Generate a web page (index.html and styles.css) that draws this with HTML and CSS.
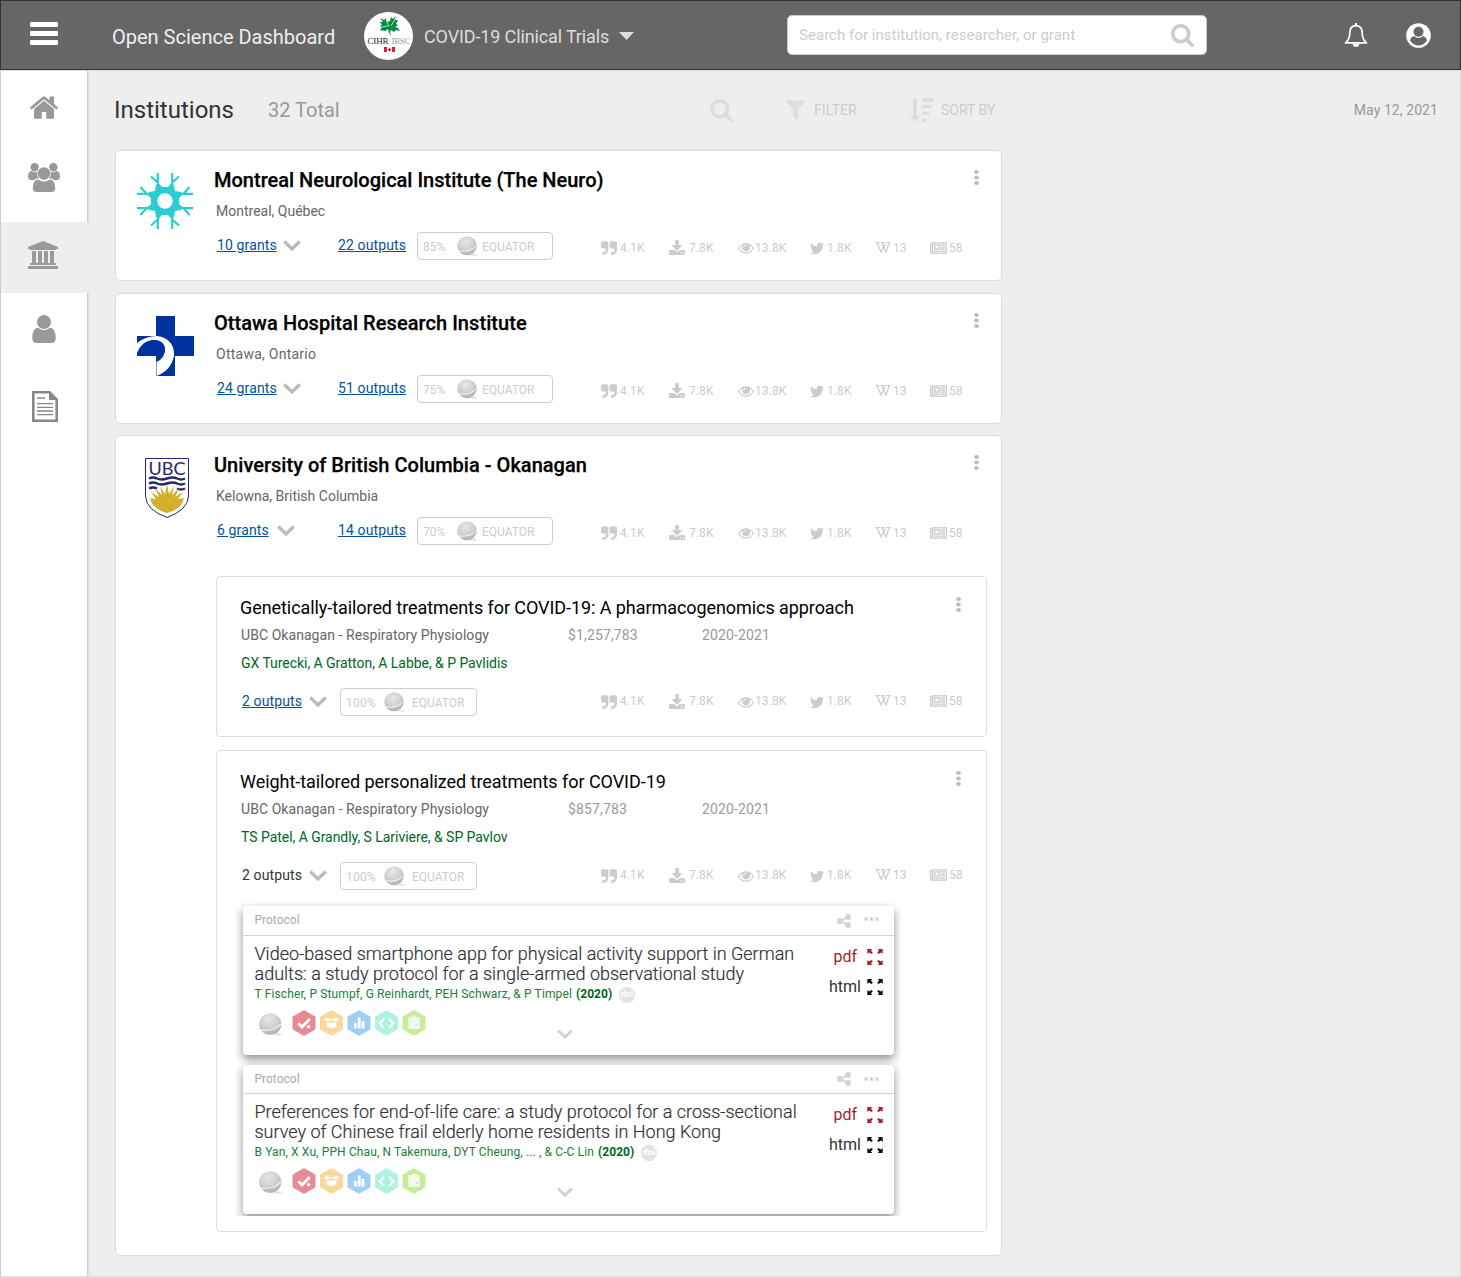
FILE: index.html
```html
<!DOCTYPE html>
<html lang="en">
<head>
<meta charset="utf-8">
<title>Open Science Dashboard</title>
<link rel="stylesheet" href="styles.css">
</head>
<body>
<svg class="defs" width="0" height="0" aria-hidden="true">
  <defs>
    <radialGradient id="ballfill" cx="42%" cy="28%" r="70%">
      <stop offset="0" stop-color="#e6e6e6"/><stop offset=".55" stop-color="#d2d2d2"/><stop offset="1" stop-color="#b4b4b4"/>
    </radialGradient>
    <radialGradient id="ballshade"><stop offset="0" stop-color="#ccc"/><stop offset="1" stop-color="#fff" stop-opacity="0"/></radialGradient>
  </defs>
  <symbol id="home" viewBox="89 253 1614 1283"><path d="M1472 992v480q0 26-19 45t-45 19h-384v-384h-256v384h-384q-26 0-45-19t-19-45v-480q0-1 .5-3t.5-3l575-474 575 474q1 2 1 6zm223-69l-62 74q-8 9-21 11h-3q-13 0-21-7l-692-577-692 577q-12 8-24 7-13-2-21-11l-62-74q-8-10-7-23.5t11-21.5l719-599q32-26 76-26t76 26l244 204v-195q0-14 9-23t23-9h192q14 0 23 9t9 23v408l219 182q10 8 11 21.5t-7 23.5z"/></symbol>
  <symbol id="search" viewBox="64 128 1664 1664"><path d="M1216 832q0-185-131.5-316.500t-316.500-131.500-316.500 131.500-131.500 316.500 131.500 316.500 316.500 131.500 316.500-131.500 131.500-316.500zm512 832q0 52-38 90t-90 38q-54 0-90-38l-343-342q-179 124-399 124-143 0-273.500-55.500t-225-150-150-225-55.500-273.500 55.500-273.500 150-225 225-150 273.500-55.500 273.500 55.500 225 150 150 225 55.500 273.500q0 220-124 399l343 343q37 37 37 90z"/></symbol>
  <symbol id="filter" viewBox="191 256 1410 1408"><path d="M1595 295q17 41-14 70l-493 493v742q0 42-39 59-13 5-25 5-27 0-45-19l-256-256q-19-19-19-45v-486l-493-493q-31-29-14-70 17-39 59-39h1280q42 0 59 39z"/></symbol>
  <symbol id="quote" viewBox="64 128 1664 1408"><path d="M832 320v704q0 104-40.500 198.500t-109.500 163.500-163.500 109.500-198.500 40.500h-64q-26 0-45-19t-19-45v-128q0-26 19-45t45-19h64q106 0 181-75t75-181v-32q0-40-28-68t-68-28h-224q-80 0-136-56t-56-136v-384q0-80 56-136t136-56h384q80 0 136 56t56 136zm896 0v704q0 104-40.500 198.500t-109.500 163.500-163.500 109.500-198.500 40.500h-64q-26 0-45-19t-19-45v-128q0-26 19-45t45-19h64q106 0 181-75t75-181v-32q0-40-28-68t-68-28h-224q-80 0-136-56t-56-136v-384q0-80 56-136t136-56h384q80 0 136 56t56 136z"/></symbol>
  <symbol id="download" viewBox="64 0 1664 1536"><path d="M1344 1344q0-26-19-45t-45-19-45 19-19 45 19 45 45 19 45-19 19-45zm256 0q0-26-19-45t-45-19-45 19-19 45 19 45 45 19 45-19 19-45zm128-224v320q0 40-28 68t-68 28h-1472q-40 0-68-28t-28-68v-320q0-40 28-68t68-28h465l135 136q58 56 136 56t136-56l136-136h464q40 0 68 28t28 68zm-325-569q17 41-14 70l-448 448q-18 19-45 19t-45-19l-448-448q-31-29-14-70 17-39 59-39h256v-448q0-26 19-45t45-19h256q26 0 45 19t19 45v448h256q42 0 59 39z"/></symbol>
  <symbol id="eye" viewBox="0 384 1792 1152"><path d="M1664 960q-152-236-381-353 61 104 61 225 0 185-131.500 316.500t-316.500 131.500-316.500-131.500-131.500-316.500q0-121 61-225-229 117-381 353 133 205 333.500 326.500t434.500 121.500 434.500-121.500 333.500-326.500zm-720-384q0-20-14-34t-34-14q-125 0-214.500 89.500t-89.500 214.500q0 20 14 34t34 14 34-14 14-34q0-86 61-147t147-61q20 0 34-14t14-34zm848 384q0 34-20 69-140 230-376.500 368.500t-499.500 138.500-499.500-139-376.500-368q-20-35-20-69t20-69q140-229 376.500-368t499.500-139 499.500 139 376.500 368q20 35 20 69z"/></symbol>
  <symbol id="twitter" viewBox="108 256 1576 1280"><path d="M1684 408q-67 98-162 167 1 14 1 42 0 130-38 259.500t-115.500 248.500-184.500 210.500-258 146-323 54.500q-271 0-496-145 35 4 78 4 225 0 401-138-105-2-188-64.500t-114-159.500q33 5 61 5 43 0 85-11-112-23-185.500-111.500t-73.500-205.500v-4q68 38 146 41-66-44-105-115t-39-154q0-88 44-163 121 149 294.500 238.500t371.500 99.500q-8-38-8-74 0-134 94.500-228.500t228.500-94.500q140 0 236 102 109-21 205-78-37 115-142 178 93-10 186-50z"/></symbol>
  <symbol id="wiki" viewBox="0 0 16 11"><path d="M.2.5h4.600M6 .5h4M11.300.5h4.500" fill="none" stroke="#ccc" stroke-width="1"/><path d="M2 .7 6.100 10 10.200 1.600M6.900.7l4.100 9.300L14.200.7" fill="none" stroke="#ccc" stroke-width="1.300"/></symbol>
  <symbol id="news" viewBox="0 256 2048 1408"><path transform="translate(0 128)" d="M1024 512h-384v384h384v-384zm128 640v128h-640v-128h640zm0-768v640h-640v-640h640zm640 768v128h-512v-128h512zm0-256v128h-512v-128h512zm0-256v128h-512v-128h512zm0-256v128h-512v-128h512zm-1536 960v-960h-128v960q0 26 19 45t45 19 45-19 19-45zm1664 0v-1088h-1536v1088q0 33-11 64h1483q26 0 45-19t19-45zm128-1216v1216q0 80-56 136t-136 56h-1664q-80 0-136-56t-56-136v-1088h256v-128h1792z" stroke="#ccc" stroke-width="40"/></symbol>
  <symbol id="bank" viewBox="0 0 1920 1792"><path d="M960 0l960 384v128h-128q0 26-20.500 45t-48.500 19h-1526q-28 0-48.500-19t-20.500-45h-128v-128zm-704 640h256v768h128v-768h256v768h128v-768h256v768h128v-768h256v768h59q28 0 48.500 19t20.500 45v64h-1664v-64q0-26 20.500-45t48.500-19h59v-768zm1595 960q28 0 48.500 19t20.500 45v128h-1920v-128q0-26 20.500-45t48.500-19h1782z"/></symbol>
  <symbol id="users" viewBox="0 0 32 29"><circle cx="6.600" cy="4.200" r="4.200"/><circle cx="25.400" cy="4.200" r="4.200"/><path d="M3.500 8Q6.500 10.300 9.300 8.700Q8.800 13.400 11 15Q7.500 15.300 6 17H3Q0 17 0 13.500Q0 8.500 3.500 8ZM28.500 8Q25.500 10.300 22.700 8.700Q23.200 13.400 21 15Q24.500 15.300 26 17H29Q32 17 32 13.500Q32 8.500 28.500 8Z"/><circle cx="16" cy="10.500" r="6.200"/><path d="M10.300 16.500Q16 20.800 21.700 16.500Q27 16.500 27.200 25Q27.200 29 23.500 29H8.500Q4.800 29 4.800 25Q5 16.500 10.300 16.500Z"/></symbol>
  <symbol id="user" viewBox="0 0 24 28"><circle cx="12" cy="7" r="7"/><path d="M6 12.800Q12 17.500 18 12.800Q23.500 13 23.700 23Q23.700 28 19.500 28H4.500Q.3 28 .3 23Q.5 13 6 12.800Z"/></symbol>
  <symbol id="ball" viewBox="0 0 24 22"><ellipse cx="17" cy="18.800" rx="7" ry="1.900" fill="url(#ballshade)"/><ellipse cx="10" cy="9.700" rx="9.800" ry="9.500" fill="url(#ballfill)"/><path d="M1.800 15Q14 16.300 19.400 9.500" fill="none" stroke="#fff" stroke-width=".9"/></symbol>
  <symbol id="chev" viewBox="0 0 18 11"><path d="M1.300 1.500 9 9 16.700 1.500" fill="none" stroke="#bbb" stroke-width="3.300"/></symbol>
  <symbol id="kebab" viewBox="0 0 5 15"><ellipse cx="2.500" cy="2" rx="2.400" ry="1.900"/><ellipse cx="2.500" cy="7.500" rx="2.400" ry="1.900"/><ellipse cx="2.500" cy="13" rx="2.400" ry="1.900"/></symbol>
  <symbol id="dots" viewBox="0 0 15 4"><circle cx="2" cy="2" r="1.900"/><circle cx="7.500" cy="2" r="1.900"/><circle cx="13" cy="2" r="1.900"/></symbol>
  <symbol id="share" viewBox="0 0 14 14"><path d="M11 3 3 7l8 4" fill="none" stroke="#d4d4d4" stroke-width="1.800"/><circle cx="11" cy="3" r="2.900"/><circle cx="3" cy="7" r="2.900"/><circle cx="11" cy="11" r="2.900"/></symbol>
  <symbol id="expand" viewBox="0 0 16 16"><path d="M.3 0H5.300L3.900 1.500 5.800 3.700 4.600 4.900 1.900 3.400 .3 5ZM15.700 0H10.700L12.100 1.500 10.200 3.700 11.400 4.900 14.100 3.400 15.700 5ZM.3 16H5.300L3.900 14.500 5.800 12.300 4.600 11.100 1.900 12.600 .3 11ZM15.700 16H10.700L12.100 14.500 10.200 12.300 11.400 11.100 14.100 12.600 15.700 11Z"/></symbol>
  <symbol id="hexes" viewBox="0 0 134 26">
    <g stroke-linejoin="round" stroke-width="3">
      <path d="M12 1.800 22 7.500V18.500L12 24.200 2 18.500V7.500Z" fill="#e78a93" stroke="#e78a93"/>
      <path transform="translate(27.500)" d="M12 1.800 22 7.500V18.500L12 24.200 2 18.500V7.500Z" fill="#fad79b" stroke="#fad79b"/>
      <path transform="translate(55)" d="M12 1.800 22 7.500V18.500L12 24.200 2 18.500V7.500Z" fill="#9fcff5" stroke="#9fcff5"/>
      <path transform="translate(82.500)" d="M12 1.800 22 7.500V18.500L12 24.200 2 18.500V7.500Z" fill="#b0f2e2" stroke="#b0f2e2"/>
      <path transform="translate(110)" d="M12 1.800 22 7.500V18.500L12 24.200 2 18.500V7.500Z" fill="#c7ec9a" stroke="#c7ec9a"/>
    </g>
    <path d="M6.300 13.200 10 17 17.800 9" fill="none" stroke="#fff" stroke-width="2.800"/><circle cx="16.600" cy="16.700" r="1.700" fill="#fff"/>
    <path d="M32 9.500 34.300 7.800 39.500 9.400 44.700 7.800 47 9.500 44.300 12 39.500 10 34.700 12ZM34.600 13 38 12 39.500 13.500 41 12 44.400 13V16.500L39.500 18.600 34.600 16.500Z" fill="#fff"/>
    <path d="M62 13h2.800v5.500H62ZM65.800 7.500h2.800v11h-2.800ZM69.600 11h2.800v7.500h-2.800Z" fill="#fff"/>
    <path d="M92 8.800 87.600 13.300 92 17.800M97 8.800 101.400 13.300 97 17.800" fill="none" stroke="#fff" stroke-width="2"/>
    <path d="M116.300 7h3l1.500-1.500h2.400L124.700 7h3V19H116.300Z" fill="#fff" opacity=".75"/><circle cx="124.700" cy="14.500" r="3" fill="#fff"/><path d="m123.200 14.500 1.200 1.200 2-2.300" fill="none" stroke="#aac" stroke-width=".9"/>
  </symbol>
</svg>

<header class="topbar">
  <button class="burger" aria-label="Menu"><i></i><i></i><i></i></button>
  <span class="brand">Open Science Dashboard</span>
  <svg class="funder" viewBox="0 0 49 48">
    <ellipse cx="24.500" cy="24" rx="24.500" ry="24" fill="#fff"/>
    <path d="M16 6l4 2 2-2 1 4 3-1 1-4 2 2 3-3-1 4 3 0-2 4 2 1-3 2 3 1 2 3-4-1-2 2-3-2-1 2 1 4-2-3-1-4-3 2-5-1 2-3-2-1 2-1-2-3 3 0z" fill="#0a8a43"/>
    <path d="M22 7.500l3 7M33 4l-6 10M18 15l6-1" stroke="#fff" stroke-width=".7" fill="none"/>
    <text x="3.500" y="31.500" textLength="21" font-size="9" fill="#222">CIHR</text><text x="27.500" y="31.500" textLength="19" font-size="9" fill="#999">IRSC</text>
    <path d="M20 35h3v5h-3zM28 35h3v5h-3zM25.500 35.500l1 1.500 1 .5-2 2-2-2 1-.5z" fill="#e31b37"/>
  </svg>
  <span class="program">COVID-19 Clinical Trials</span>
  <svg class="caret" viewBox="0 0 15 8"><path d="M0 0h15L7.500 8z" fill="#ddd"/></svg>
  <div class="searchbox"><span>Search for institution, researcher, or grant</span><svg><use href="#search"/></svg></div>
  <svg class="bell" viewBox="0 0 24 25"><path d="M12 0v2.500" stroke="#fff" stroke-width="2"/><path d="M12 2.600C7.500 2.600 5.800 6 5.800 10C5.800 15 4.500 17.500 1.500 19.900H22.500C19.500 17.500 18.200 15 18.200 10C18.200 6 16.500 2.600 12 2.600Z" fill="none" stroke="#fff" stroke-width="1.700" stroke-linejoin="round"/><path d="M8.500 20.500h7Q15 24 12 24T8.500 20.500Z" fill="#fff"/></svg>
  <svg class="account" viewBox="0 0 25 25"><circle cx="12.500" cy="12.500" r="12.300" fill="#fff"/><circle cx="12.500" cy="8.700" r="5" fill="#666"/><path d="M8 13Q12.500 16.800 17 13Q20.500 14 21 17.500Q17.500 22.500 12.500 22.500T4 17.500Q4.500 14 8 13Z" fill="#666"/></svg>
</header>

<div class="shell">
  <nav class="rail">
    <a class="r-home"><svg><use href="#home"/></svg></a>
    <a class="r-users"><svg><use href="#users"/></svg></a>
    <a class="r-bank active"><svg><use href="#bank"/></svg></a>
    <a class="r-user"><svg><use href="#user"/></svg></a>
    <a class="r-file"><svg viewBox="0 0 26 31"><path d="M1.300 1.300H17.500L24.700 8.500V29.700H1.300Z" fill="#fff" stroke="#888" stroke-width="2.600"/><path d="M17 0v9h9Z" fill="#888"/><path d="M5 7h8M5 12.600h16M5 16.400h16M5 20h16M5 23.700h16" stroke="#888" stroke-width="1.300"/></svg></a>
  </nav>

  <main class="content">
    <div class="toolbar">
      <h1>Institutions</h1><span class="total">32 Total</span>
      <svg class="t-search"><use href="#search"/></svg>
      <svg class="t-filter"><use href="#filter"/></svg><span class="t-label filter-label">FILTER</span>
      <svg class="t-sort" viewBox="0 0 24 25"><path d="M3 0h4v18h3.500L5 24-.2 18H3ZM12 .5h12v3.500H12ZM12 7h9.500v3H12ZM12 14h7v3H12ZM12 21h4.500v3H12Z"/></svg><span class="t-label">SORT BY</span>
      <span class="date">May 12, 2021</span>
    </div>

    <section class="card">
      <div class="logo"><svg class="neuro" viewBox="-28 -28 56 56"><path d="M-3-14H3L6-17.500 9-16 10-10 16-9 17.500-6 14-3V3L17.500 6 16 9 10 10 9 16 6 17.500 3 14H-3L-6 17.500-9 16-10 10-16 9-17.500 6-14 3V-3L-17.500-6-16-9-10-10-9-16-6-17.500ZM0-7.700A7.700 7.700 0 0 0 0 7.700A7.700 7.700 0 0 0 0-7.700Z" fill="#2bcdd3"/><g fill="none" stroke="#2bcdd3" stroke-width="2.200">
        <g id="arm"><path d="M-7.200-15V-28M-7.200-18.500-14-24.500M7.200-15V-28M7.200-18.500 14-24.500"/></g><use href="#arm" transform="rotate(90)"/><use href="#arm" transform="rotate(180)"/><use href="#arm" transform="rotate(270)"/></g></svg></div>
      <div class="info">
        <div class="headline"><h2>Montreal Neurological Institute (The Neuro)</h2><svg class="kebab"><use href="#kebab"/></svg></div>
        <p class="place">Montreal, Québec</p>
        <div class="stats">
          <div class="grants"><a>10 grants</a><svg class="chev"><use href="#chev"/></svg></div><a class="outputs">22 outputs</a>
          <div class="pill"><span>85%</span><svg><use href="#ball"/></svg><b>EQUATOR</b></div>
          <ul class="metrics"><li><svg><use href="#quote"/></svg>4.1K</li><li><svg><use href="#download"/></svg>7.8K</li><li><svg><use href="#eye"/></svg>13.8K</li><li><svg><use href="#twitter"/></svg>1.8K</li><li><svg><use href="#wiki"/></svg>13</li><li><svg><use href="#news"/></svg>58</li></ul>
        </div>
      </div>
    </section>

    <section class="card ohri">
      <div class="logo"><svg class="ottawa" viewBox="0 0 57 60"><path d="M19 0h19v20h19v20H38v20H19V40H0V20h19Z" fill="#0033a0"/><path d="M0 27Q9 20 20 20C32 21 38 30 37 40C35 50 28 57 19.500 60V46Q28 42 28 33Q27 24 17 24Q5 25 0 37Z" fill="#fff"/><path d="M0 40V38Q5 24 17 24Q28 25 28 34Q27 42 19 46V40Z" fill="#0033a0"/></svg></div>
      <div class="info">
        <div class="headline"><h2>Ottawa Hospital Research Institute</h2><svg class="kebab"><use href="#kebab"/></svg></div>
        <p class="place">Ottawa, Ontario</p>
        <div class="stats">
          <div class="grants"><a>24 grants</a><svg class="chev"><use href="#chev"/></svg></div><a class="outputs">51 outputs</a>
          <div class="pill"><span>75%</span><svg><use href="#ball"/></svg><b>EQUATOR</b></div>
          <ul class="metrics"><li><svg><use href="#quote"/></svg>4.1K</li><li><svg><use href="#download"/></svg>7.8K</li><li><svg><use href="#eye"/></svg>13.8K</li><li><svg><use href="#twitter"/></svg>1.8K</li><li><svg><use href="#wiki"/></svg>13</li><li><svg><use href="#news"/></svg>58</li></ul>
        </div>
      </div>
    </section>

    <section class="card open">
      <div class="logo"><svg class="ubc" viewBox="0 0 44 60"><path d="M.5.500h43V38Q43 52 22 59.500Q1 52 .5 38Z" fill="#fff" stroke="#25286b"/><text x="3.500" y="16.500" textLength="37" lengthAdjust="spacingAndGlyphs" font-size="17.500" fill="#25286b">UBC</text><path d="M4 20.500q4-2 8 0t10 0 10 0 8 0M4 25.500q4-2 8 0t10 0 10 0 8 0M4 30.500q4-2 8 0M32 30.500q4 2 8 0" stroke="#25286b" stroke-width="2.500" fill="none"/><path d="M5 40l6 1-5-7 8 5-4-9 7 7-2-9 5 8 2-10 2 10 5-8-2 9 7-7-4 9 8-5-5 7 6-1Q37 51 22 55Q7 51 5 40Z" fill="#d1b02b"/></svg></div>
      <div class="info">
        <div class="headline"><h2>University of British Columbia - Okanagan</h2><svg class="kebab"><use href="#kebab"/></svg></div>
        <p class="place">Kelowna, British Columbia</p>
        <div class="stats">
          <div class="grants"><a>6 grants</a><svg class="chev"><use href="#chev"/></svg></div><a class="outputs">14 outputs</a>
          <div class="pill"><span>70%</span><svg><use href="#ball"/></svg><b>EQUATOR</b></div>
          <ul class="metrics"><li><svg><use href="#quote"/></svg>4.1K</li><li><svg><use href="#download"/></svg>7.8K</li><li><svg><use href="#eye"/></svg>13.8K</li><li><svg><use href="#twitter"/></svg>1.8K</li><li><svg><use href="#wiki"/></svg>13</li><li><svg><use href="#news"/></svg>58</li></ul>
        </div>

        <article class="grant">
          <div class="headline"><h3>Genetically-tailored treatments for COVID-19: A pharmacogenomics approach</h3><svg class="kebab"><use href="#kebab"/></svg></div>
          <div class="facts"><span>UBC Okanagan - Respiratory Physiology</span><span>$1,257,783</span><span>2020-2021</span></div>
          <p class="people">GX Turecki, A Gratton, A Labbe, &amp; P Pavlidis</p>
          <div class="stats">
            <div class="grants"><a>2 outputs</a><svg class="chev"><use href="#chev"/></svg></div>
            <div class="pill"><span>100%</span><svg><use href="#ball"/></svg><b>EQUATOR</b></div>
            <ul class="metrics"><li><svg><use href="#quote"/></svg>4.1K</li><li><svg><use href="#download"/></svg>7.8K</li><li><svg><use href="#eye"/></svg>13.8K</li><li><svg><use href="#twitter"/></svg>1.8K</li><li><svg><use href="#wiki"/></svg>13</li><li><svg><use href="#news"/></svg>58</li></ul>
          </div>
        </article>

        <article class="grant expanded">
          <div class="headline"><h3>Weight-tailored personalized treatments for COVID-19</h3><svg class="kebab"><use href="#kebab"/></svg></div>
          <div class="facts"><span>UBC Okanagan - Respiratory Physiology</span><span>$857,783</span><span>2020-2021</span></div>
          <p class="people">TS Patel, A Grandly, S Lariviere, &amp; SP Pavlov</p>
          <div class="stats">
            <div class="grants"><span>2 outputs</span><svg class="chev"><use href="#chev"/></svg></div>
            <div class="pill"><span>100%</span><svg><use href="#ball"/></svg><b>EQUATOR</b></div>
            <ul class="metrics"><li><svg><use href="#quote"/></svg>4.1K</li><li><svg><use href="#download"/></svg>7.8K</li><li><svg><use href="#eye"/></svg>13.8K</li><li><svg><use href="#twitter"/></svg>1.8K</li><li><svg><use href="#wiki"/></svg>13</li><li><svg><use href="#news"/></svg>58</li></ul>
          </div>

          <div class="papers">
            <div class="paper">
              <div class="paper-top"><span>Protocol</span><svg class="share"><use href="#share"/></svg><svg class="dots"><use href="#dots"/></svg></div>
              <div class="paper-body">
                <div class="paper-text">
                  <h4>Video-based smartphone app for physical activity support in German<br>adults: a study protocol for a single-armed observational study</h4>
                  <p>T Fischer, P Stumpf, G Reinhardt, PEH Schwarz, &amp; P Timpel <b>(2020)</b><span class="doi">doi</span></p>
                </div>
                <div class="formats"><div class="pdf"><span>pdf</span><svg><use href="#expand"/></svg></div><div><span>html</span><svg><use href="#expand"/></svg></div></div>
              </div>
              <div class="badges"><svg class="ball"><use href="#ball"/></svg><svg class="hexes"><use href="#hexes"/></svg><svg class="more"><use href="#chev"/></svg></div>
            </div>
            <div class="paper second">
              <div class="paper-top"><span>Protocol</span><svg class="share"><use href="#share"/></svg><svg class="dots"><use href="#dots"/></svg></div>
              <div class="paper-body">
                <div class="paper-text">
                  <h4>Preferences for end-of-life care: a study protocol for a cross-sectional<br>survey of Chinese frail elderly home residents in Hong Kong</h4>
                  <p>B Yan, X Xu, PPH Chau, N Takemura, DYT Cheung, ... , &amp; C-C Lin <b>(2020)</b><span class="doi">doi</span></p>
                </div>
                <div class="formats"><div class="pdf"><span>pdf</span><svg><use href="#expand"/></svg></div><div><span>html</span><svg><use href="#expand"/></svg></div></div>
              </div>
              <div class="badges"><svg class="ball"><use href="#ball"/></svg><svg class="hexes"><use href="#hexes"/></svg><svg class="more"><use href="#chev"/></svg></div>
            </div>
          </div>
        </article>
      </div>
    </section>
  </main>
</div>
</body>
</html>
```
FILE: styles.css
```css
* { box-sizing: border-box; }
body {
  margin: 0;
  width: 1461px;
  height: 1278px;
  overflow: hidden;
  background: #eee;
  font-family: Roboto, "Liberation Sans", sans-serif;
  font-size: 14px;
  color: #666;
}
h1, h2, h3, h4, p, ul { margin: 0; padding: 0; font-weight: 400; }
svg { display: block; flex: none; }
.defs { position: absolute; }

/* top bar */
.topbar {
  height: 70px;
  display: flex;
  align-items: center;
  background: #666;
  border: 1px solid #333;
  padding-left: 29px;
  white-space: nowrap;
}
.burger {
  width: 28px;
  padding: 0;
  border: 0;
  background: none;
  display: grid;
  gap: 4px;
  margin-top: -3px;
}
.burger i { height: 5px; background: #fff; border-radius: 1px; }
.brand { margin-left: 54px; width: 252px; font-size: 20px; line-height: 24px; margin-top: 4px; color: #eee; }
.funder { width: 49px; height: 48px; margin-top: 2px; font-family: "Liberation Serif", serif; }
.program { margin-left: 11px; width: 194.500px; font-size: 18px; letter-spacing: -.13px; margin-top: 3px; color: #ddd; }
.caret { width: 15px; height: 8px; margin-top: 2px; }
.searchbox {
  margin-left: 153.500px;
  width: 420px;
  height: 40px;
  background: #fff;
  border: 1px solid #ccc;
  border-radius: 5px;
  display: flex;
  align-items: center;
  justify-content: space-between;
  padding: 0 12px 0 11px;
  font-size: 15px;
  letter-spacing: .04px;
  color: #ccc;
}
.searchbox svg { width: 23px; height: 23px; fill: #ccc; margin-top: 1px; }
.bell { width: 24px; height: 25px; margin-left: 137px; }
.account { width: 25px; height: 25px; margin-left: 37.500px; }

/* page frame */
.shell {
  height: 1208px;
  display: flex;
  border: 1px solid #ddd;
  border-bottom-width: 2px;
  border-left-color: #ccc;
}
.rail { width: 88px; background: #fff; flex: none; fill: #999; border-right: 1px solid #ddd; }
.rail a { display: flex; justify-content: center; align-items: center; height: 71px; border-right: 1px solid #ccc; padding-right: 1px; }
.rail .r-home { height: 74px; padding-bottom: 2px; }
.rail .r-users { height: 77px; padding-bottom: 12px; }
.rail .active { background: #eee; border-right-color: #eee; margin-right: -1px; padding-right: 4px; padding-bottom: 6px; }
.rail .r-user { height: 73px; padding-bottom: 2px; }
.rail .r-file { height: 910px; align-items: flex-start; padding-top: 25px; padding-left: 2px; }
.r-home svg { width: 28px; height: 23px; }
.r-users svg { width: 32px; height: 29px; }
.r-bank svg { width: 30px; height: 28px; }
.r-user svg { width: 24px; height: 28px; }
.r-file svg { width: 26px; height: 31px; }

.content { width: 1371px; padding-left: 26px; }
.toolbar { height: 79px; padding-bottom: 1px; display: flex; align-items: center; color: #ccc; fill: #ddd; font-size: 14px; white-space: nowrap; }
.toolbar h1 { width: 154px; margin-left: -1px; font-size: 24px; color: #333; }
.total { width: 441.500px; font-size: 20px; color: #999; }
.t-search { width: 23px; height: 23px; }
.t-filter { width: 19px; height: 20px; margin-left: 53.500px; }
.t-label { margin-left: 7px; }
.filter-label { width: 96px; margin-left: 9px; letter-spacing: .1px; }
.t-sort { width: 24px; height: 25px; }
.date { margin-left: auto; margin-right: 22px; letter-spacing: .08px; color: #999; }

/* institution cards */
.card {
  width: 887px;
  height: 131px;
  margin-bottom: 12px;
  display: flex;
  background: #fff;
  border: 1px solid #ddd;
  border-radius: 5px;
}
.card.open { height: 821px; margin-top: -1px; }
.logo { width: 98px; flex: none; padding: 22px 0 0 21px; }
.neuro { width: 56px; height: 56px; margin: -.5px 0 0 -.5px; }
.ottawa { width: 57px; height: 60px; }
.ubc { width: 44px; height: 60px; margin-left: 8px; font-family: Lato, sans-serif; font-weight: 400; }
.info { width: 773px; padding-top: 17px; }
.headline { display: flex; justify-content: space-between; height: 24px; white-space: nowrap; }
.headline h2 { font-size: 20px; font-weight: 500; line-height: 24px; color: #000; -webkit-text-stroke: .25px #000; }
.ohri h2 { letter-spacing: .06px; }
.open h2 { letter-spacing: .02px; }
.kebab { width: 5px; height: 15px; fill: #bbb; margin: 2px 8px 0 0; }
.place { margin: 9px 0 11px 2px; line-height: 20px; color: #666; }
.ohri .place { letter-spacing: .25px; }
.stats { display: flex; height: 28px; padding-left: 3px; white-space: nowrap; }
.stats a { color: #005399; text-decoration: underline; line-height: 26px; letter-spacing: .12px; }
.grants { width: 121px; display: flex; line-height: 26px; color: #333; letter-spacing: .12px; }
.chev { width: 18px; height: 11px; margin: 8px 0 0 6px; }
.open > .info > .stats .chev { margin-left: 8px; }
.grant .chev { margin-left: 7px; }
.outputs { width: 79px; }
.pill {
  width: 136px;
  height: 28px;
  border: 1px solid #ccc;
  border-radius: 4px;
  display: flex;
  align-items: center;
  padding-left: 5px;
  font-size: 12px;
  color: #ccc;
}
.pill span { width: 34px; padding-top: 1px; }
.pill svg { width: 24px; height: 22px; margin-top: 1px; }
.pill b { font-weight: 400; margin-left: 1px; padding-top: 1px; }
.metrics {
  margin-left: 48px;
  display: grid;
  grid-template-columns: 68px 69px 72px 65px 55px 34px;
  list-style: none;
  font-size: 12px;
  letter-spacing: .1px;
  color: #ccc;
  fill: #ccc;
  height: 31px;
}
.metrics li { display: flex; align-items: center; gap: 3px; }
.metrics svg { width: 16px; height: 13px; margin-top: 2px; }
.metrics li:nth-child(1) svg { height: 14px; margin-top: 1px; }
.metrics li:nth-child(2) svg { height: 15px; margin-top: 0; }
.metrics li:nth-child(2) { gap: 4px; }
.metrics li:nth-child(3) { gap: 1px; }
.metrics li:nth-child(4) svg { width: 14px; }
.metrics li:nth-child(5) { gap: 2px; }
.metrics li:nth-child(5) svg { height: 11px; margin-top: -1px; }
.metrics li:nth-child(6) svg { width: 17px; height: 12px; margin-top: 0; }
.metrics li:nth-child(6) { gap: 2px; }

/* grants inside an institution */
.grant {
  width: 771px;
  height: 161px;
  margin: 31px 0 13px 2px;
  border: 1px solid #ddd;
  border-radius: 4px;
  padding: 18px 0 0 23px;
}
.grant.expanded { height: 482px; margin-top: 0; }
.grant .headline h3 { font-size: 18px; line-height: 26px; letter-spacing: -.07px; color: #000; }
.grant.expanded h3 { letter-spacing: -.05px; }
.grant .kebab { margin: 2px 25px 0 0; }
.facts { display: grid; grid-template-columns: 327px 134px 1fr; margin: 6px 0 0 1px; line-height: 20px; letter-spacing: .06px; color: #666; }
.facts span + span { color: #999; letter-spacing: .14px; }
.people { margin: 8px 0 15px 1px; line-height: 20px; letter-spacing: -.04px; color: #006621; }
.grant .stats { padding-left: 2px; }
.grant .grants { width: 98px; }
.grant .pill { width: 137px; }
.grant .pill span { width: 38px; letter-spacing: .2px; }
.grant .pill b { margin-left: 4px; }
.grant .metrics { margin-left: 124px; height: 26px; }

/* paper cards */
.papers { margin: 8px 0 0 -5px; width: 668px; height: 318px; overflow: hidden; padding: 8px 8px 0; }
.paper { width: 651px; height: 149px; margin-bottom: 10px; background: #fff; border-radius: 4px; box-shadow: 0 4px 10px rgba(0, 0, 0, .45); }
.paper-top { height: 30px; padding: 0 15px 2px 11.500px; display: flex; align-items: center; border-bottom: 1px solid #d4d4d4; font-size: 12px; color: #aaa; fill: #d4d4d4; }
.second .paper-top { height: 29px; padding-bottom: 0; }
.share { width: 14px; height: 14px; margin: 2px 13px 0 auto; }
.second .share { margin-top: -1px; }
.dots { width: 15px; height: 4px; margin-top: -1px; }
.paper-body { display: flex; height: 68px; padding-left: 11.500px; white-space: nowrap; }
.paper-text { width: 574px; padding-top: 8px; }
.paper-text h4 { font-size: 18px; font-weight: 300; line-height: 20px; color: #333; -webkit-text-stroke: .2px #333; }
.paper-text p { display: flex; font-size: 12px; line-height: 20px; letter-spacing: .125px; color: #1a7d3a; }
.paper-text p b { margin-left: 4px; letter-spacing: .05px; color: #006621; }
.doi { width: 16px; height: 16px; margin: 3px 0 0 6.500px; border-radius: 50%; background: #e2e2e2; color: #fff; font-size: 9px; line-height: 15px; letter-spacing: 0; font-weight: 700; text-align: center; }
.formats { width: 54.500px; padding-top: 6px; font-size: 16px; color: #333; fill: #111; }
.formats div { display: flex; align-items: center; justify-content: flex-end; height: 30px; gap: 6px; }
.formats span { padding-bottom: 2px; }
.formats .pdf { color: #a3222a; fill: #a3222a; }
.formats .pdf span { margin-right: 4px; }
.formats svg { width: 16px; height: 16px; }
.badges { display: flex; padding: 6px 0 0 14.500px; }
.badges .ball { width: 29px; height: 25px; margin-top: 2.500px; }
.hexes { width: 134px; height: 26px; margin-left: 5px; }
.more { width: 16px; height: 10px; margin: 18.500px 0 0 131px; opacity: .65; }
```
